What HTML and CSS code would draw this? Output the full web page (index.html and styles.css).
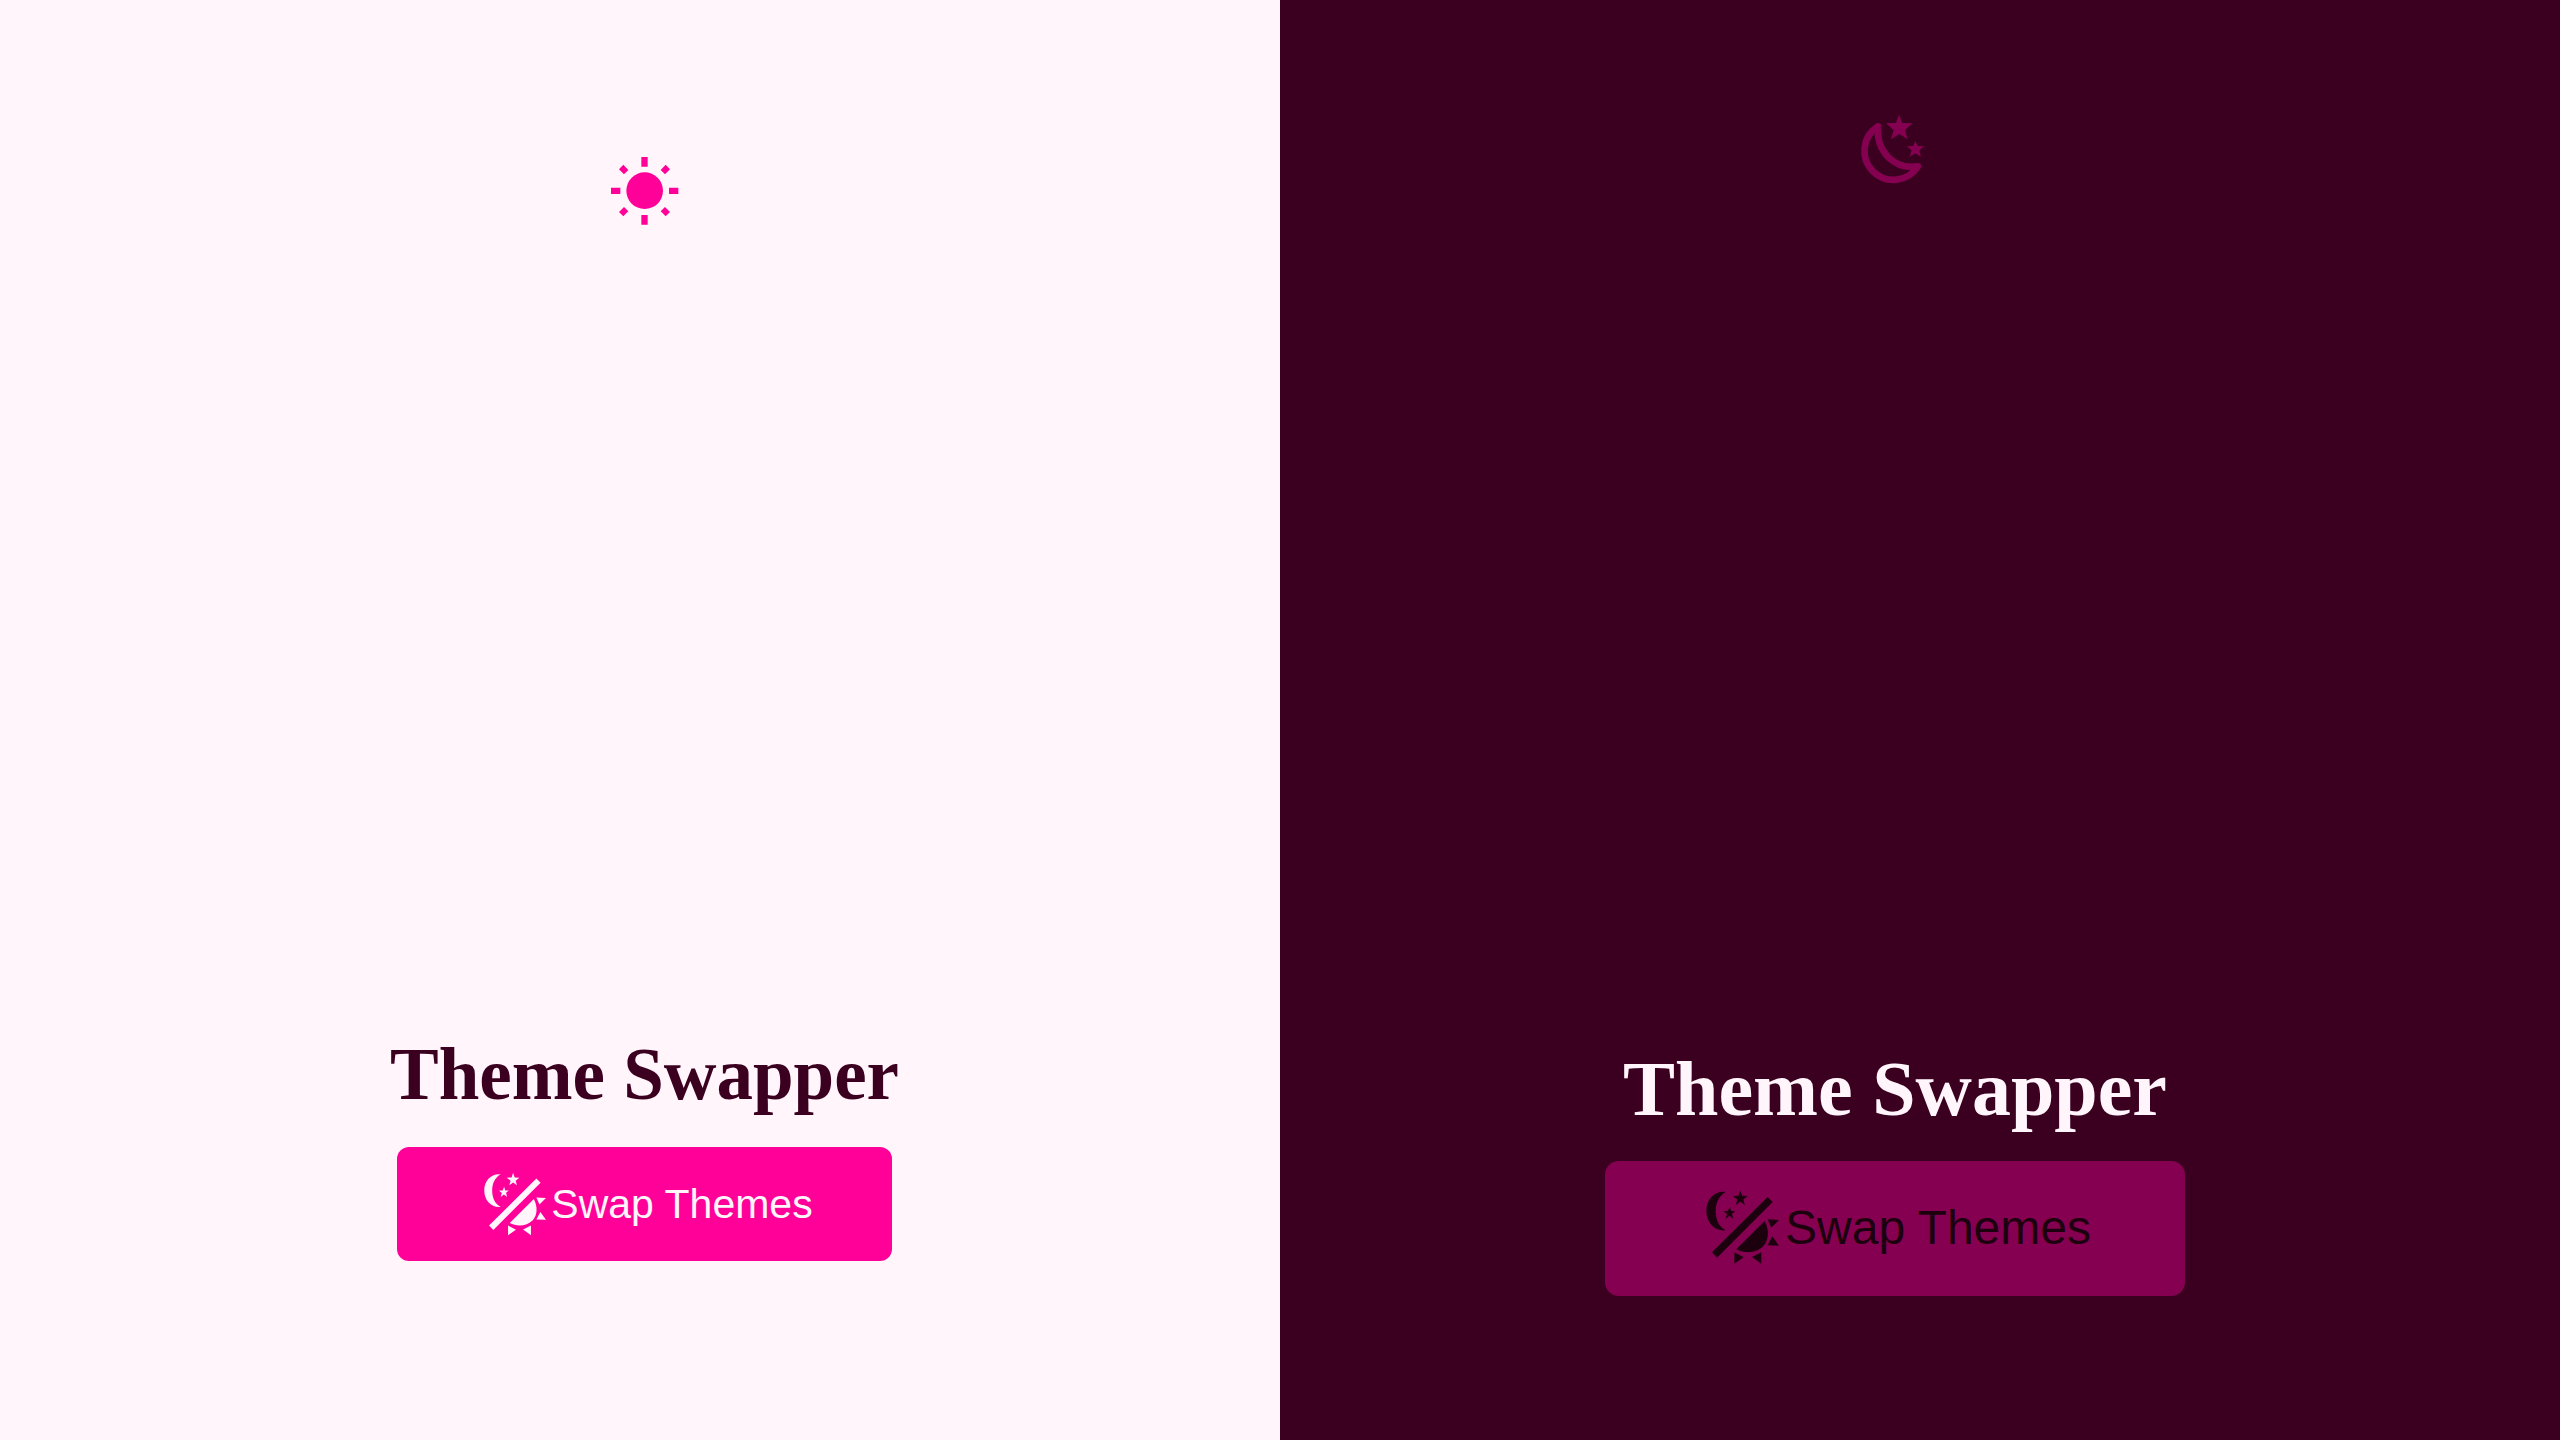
FILE: index.html
```
<!DOCTYPE html>
<html lang="en">
<head>
  <meta charset="utf-8">
  <meta name="viewport" content="width=device-width, initial-scale=1">
  <title>Theme Swapper</title>
  <link rel="stylesheet" href="styles.css">
</head>
<body>
  <svg class="sprite" aria-hidden="true">
    <defs>
      <g id="swap-icon">
        <path d="M77 35C45 31 19 56 19 92C19 128 45 154 78 150C57 141 47 118 47 92C47 68 57 46 77 35Z"/>
        <path d="M121 30L126.500 46.500L143 47L130 57.500L134.500 74L121 64.500L107.500 74L112 57.500L98 47L115.500 46.500Z"/>
        <path d="M89 79L93.500 92L106 92.500L96 100.500L99.500 115L88.500 106.500L77 115L81 101L71 92.500L84 92Z"/>
        <path d="M203 50L218 65L51 232L36 216Z"/>
        <path d="M194 122C209 150 206 180 190 197C170 218 135 221 109 207Z"/>
        <path d="M203 117L237 119L214 142ZM217 168L237 196L203 195ZM103 216L131 231L103 250ZM184 216L184 250L156 230Z"/>
      </g>
    </defs>
  </svg>
  <main class="themes">
    <section class="panel light">
      <svg class="emblem" viewBox="0 0 270 270" aria-hidden="true">
        <circle cx="134" cy="137" r="55"/>
        <path d="M124 36H143V65H124ZM124 210H143V239H124ZM33 128H61V147H33ZM207 128H235V147H207Z"/>
        <path d="M70 59L85 75L72 88L57 73ZM197 59L210 73L195 88L182 75ZM57 201L72 186L85 199L70 214ZM182 199L195 186L210 201L197 214Z"/>
      </svg>
      <div class="controls">
        <h1 class="title">Theme Swapper</h1>
        <button class="swap" type="button">
          <svg class="swap-icon" viewBox="-10 27 254 226" aria-hidden="true"><use href="#swap-icon"/></svg>
          <span>Swap Themes</span>
        </button>
      </div>
    </section>
    <section class="panel dark">
      <svg class="emblem" viewBox="0 0 270 270" aria-hidden="true">
        <path class="moon" d="M84 64A87 87 0 1 0 204 184C172 189 141 182 116 158C91 133 81 100 84 64Z"/>
        <path d="M147 29L157 54L188 55L165 75L173 103L148 87L123 103L131 75L108 55L138 54ZM196 108L203 123L222 124L208 136L213 155L196 145L179 155L185 136L170 124L190 123Z"/>
      </svg>
      <div class="controls">
        <h1 class="title">Theme Swapper</h1>
        <button class="swap" type="button">
          <svg class="swap-icon" viewBox="-3 32 249 222" aria-hidden="true"><use href="#swap-icon"/></svg>
          <span>Swap Themes</span>
        </button>
      </div>
    </section>
  </main>
</body>
</html>
```
FILE: styles.css
```
* {
  box-sizing: border-box;
}

body {
  margin: 0;
}

.sprite {
  display: none;
}

.themes {
  display: grid;
  grid-template-columns: 1fr 1fr;
  min-height: 100vh;
}

.panel {
  display: flex;
  flex-direction: column;
  align-items: center;
  justify-content: space-between;
  background: var(--surface);
  color: var(--heading);
}

.light {
  --surface: #fff5fb;
  --heading: #3b0020;
  --accent: #ff0099;
  --label: #fff5fb;
  padding: 145px 0 179px 9px;
}

.dark {
  --surface: #3b0020;
  --heading: #fff5fb;
  --accent: #850051;
  --label: #1c000e;
  padding: 105px 50px 144px 0;
}

.emblem {
  width: 90px;
  height: 90px;
  fill: var(--accent);
}

.moon {
  fill: none;
  stroke: var(--accent);
  stroke-width: 20px;
  stroke-linejoin: round;
}

.controls {
  display: flex;
  flex-direction: column;
  align-items: center;
  gap: 30px;
}

.title {
  margin: 0;
  font: bold 73px/84px "Liberation Serif", "Times New Roman", serif;
}

.swap {
  display: flex;
  align-items: center;
  justify-content: center;
  gap: 3px;
  height: 114px;
  padding: 0 79px;
  border: 0;
  border-radius: 12px;
  background: var(--accent);
  color: var(--label);
  font: 41px/48px "Liberation Sans", Arial, sans-serif;
  cursor: pointer;
}

.swap-icon {
  width: 72px;
  height: 64px;
  fill: currentColor;
}

.dark .title {
  font-size: 78px;
}

.dark .swap {
  height: 135px;
  padding: 0 94px 2px;
  border-radius: 14px;
  font-size: 48px;
}

.dark .swap-icon {
  width: 83px;
  height: 74px;
}
```
